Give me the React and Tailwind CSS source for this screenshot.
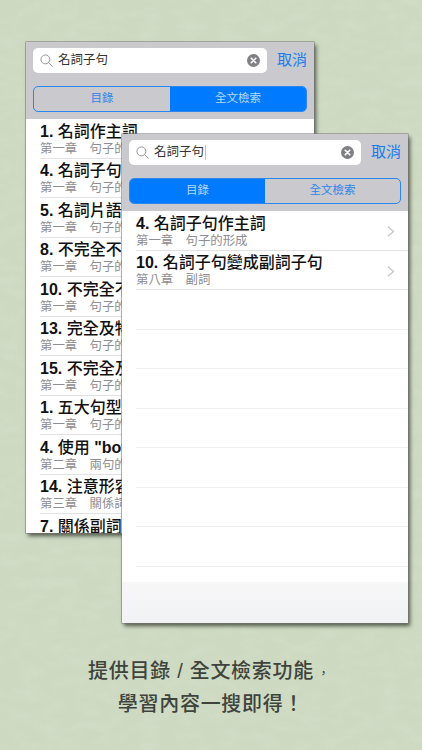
import React from "react";

const cjk = "font-['Liberation_Sans','Noto_Sans_CJK_TC',sans-serif]";

const backRows = [
  ["1.", "名詞作主詞", "第一章　句子的形成"],
  ["4.", "名詞子句作主詞", "第一章　句子的形成"],
  ["5.", "名詞片語作主詞", "第一章　句子的形成"],
  ["8.", "不完全不及物動詞", "第一章　句子的形成"],
  ["10.", "不完全不及物動詞", "第一章　句子的形成"],
  ["13.", "完全及物動詞", "第一章　句子的形成"],
  ["15.", "不完全及物動詞", "第一章　句子的形成"],
  ["1.", "五大句型", "第一章　句子的形成"],
  ["4.", <>使用 <b>"both"</b></>, "第二章　兩句的連接"],
  ["14.", "注意形容詞子句", "第三章　關係詞"],
  ["7.", "關係副詞", "第三章　關係詞"],
];

const frontRows = [
  ["4.", "名詞子句作主詞", "第一章　句子的形成"],
  ["10.", "名詞子句變成副詞子句", "第八章　副詞"],
];

const SearchIcon = () => (
  <svg width="13" height="13" viewBox="0 0 14 14" fill="none" stroke="#8e8e93" strokeWidth="1" className="shrink-0">
    <circle cx="5.8" cy="5.8" r="4.8" />
    <path d="M9.3 9.3l4 4" strokeLinecap="round" />
  </svg>
);

const ClearIcon = () => (
  <svg width="13" height="13" viewBox="0 0 13 13" className="shrink-0">
    <circle cx="6.5" cy="6.5" r="6.5" fill="#7f7f84" />
    <path d="M4.2 4.2l4.6 4.6M8.8 4.2l-4.6 4.6" stroke="#fff" strokeWidth="1.6" strokeLinecap="round" />
  </svg>
);

const Chevron = () => (
  <svg width="8" height="11" viewBox="0 0 8 11" fill="none" stroke="#c7c7cc" strokeWidth="1.4" className="shrink-0">
    <path d="M1 .7l5.4 4.8L1 10.3" />
  </svg>
);

const Header = ({ active, caret }) => (
  <div className="h-[77px] shrink-0 bg-[#c9c9ce] pt-[6px] pr-[7px] pl-[7px]">
    <div className="flex h-[25px] items-center gap-[10px]">
      <div className="flex h-full flex-1 items-center rounded-[5px] bg-white px-[7px]">
        <SearchIcon />
        <span className="ml-[5px] text-[12.5px] text-[#333]">名詞子句</span>
        {caret && <span className="ml-px h-[15px] w-px bg-[#a9c8ec]" />}
        <span className="flex-1" />
        <ClearIcon />
      </div>
      <span className="w-[30px] text-[15px] text-[#167cf0]">取消</span>
    </div>
    <div className="mt-[13px] flex h-[26px] overflow-hidden rounded-[5px] border border-[#2b86ee] text-[11.5px]">
      <div className={`flex flex-1 items-center justify-center ${active === 0 ? "bg-[#007aff] text-[#b9d8fb]" : "text-[#2f86ec]"}`}>目錄</div>
      <div className={`flex flex-1 items-center justify-center ${active === 1 ? "bg-[#007aff] text-[#b9d8fb]" : "text-[#2f86ec]"}`}>全文檢索</div>
    </div>
  </div>
);

const Row = ({ num, title, sub, arrow }) => (
  <div className="flex h-[39.5px] items-center justify-between border-b border-[#e2e2e4] pt-[3px] pr-[13px]">
    <div className="min-w-0 whitespace-nowrap">
      <div className="text-[16px] leading-[18px] font-medium text-[#111]">
        <span className="font-bold">{num}</span> {title}
      </div>
      <div className="text-[12.4px] leading-[16px] text-[#8e8e93]">{sub}</div>
    </div>
    {arrow && <Chevron />}
  </div>
);

export default function App() {
  return (
    <div lang="zh-TW" className={`relative h-[750px] w-[422px] overflow-hidden bg-[#cdd9c1] ${cjk}`}>
      {/* paper texture */}
      <svg className="absolute inset-0 opacity-15" width="422" height="750">
        <filter id="paper">
          <feTurbulence type="fractalNoise" baseFrequency="0.05 0.09" numOctaves="3" seed="4" />
          <feColorMatrix values="0 0 0 0 1  0 0 0 0 1  0 0 0 0 0.95  0 0 0 1.4 -0.55" />
        </filter>
        <rect width="422" height="750" filter="url(#paper)" />
      </svg>

      {/* back window */}
      <div className="absolute top-[42px] left-[26px] flex h-[491px] w-[288px] flex-col overflow-hidden shadow-[0_0_0_0.5px_#777,2px_3px_4px_rgba(40,45,35,0.75)]">
        <Header active={1} />
        <div className="flex-1 overflow-hidden bg-white pl-[14px]">
          {backRows.map(([num, title, sub], i) => (
            <Row key={i} num={num} title={title} sub={sub} />
          ))}
        </div>
      </div>

      {/* front window */}
      <div className="absolute top-[134px] left-[122px] flex h-[489px] w-[286px] flex-col overflow-hidden shadow-[0_0_0_0.5px_#777,2px_3px_4px_rgba(40,45,35,0.75)]">
        <Header active={0} caret />
        <div className="flex-1 overflow-hidden bg-white pl-[14px]">
          {frontRows.map(([num, title, sub], i) => (
            <Row key={i} num={num} title={title} sub={sub} arrow />
          ))}
          {[0, 1, 2, 3, 4, 5, 6].map((i) => (
            <div key={i} className="h-[39.5px] border-b border-[#f0f0f1]" />
          ))}
        </div>
        <div className="h-[41px] shrink-0 bg-gradient-to-b from-[#f7f7f8] to-[#f1f2f4]" />
      </div>

      {/* caption */}
      <div className="absolute inset-x-0 top-[654px] pt-px text-center text-[20px] leading-[33px] font-medium tracking-[0.7px] text-[#3e443d]">
        <p>提供目錄 / 全文檢索功能<span className="inline-block w-[20px] text-[12px] leading-none font-normal">，</span></p>
        <p>學習內容一搜即得！</p>
      </div>
    </div>
  );
}
